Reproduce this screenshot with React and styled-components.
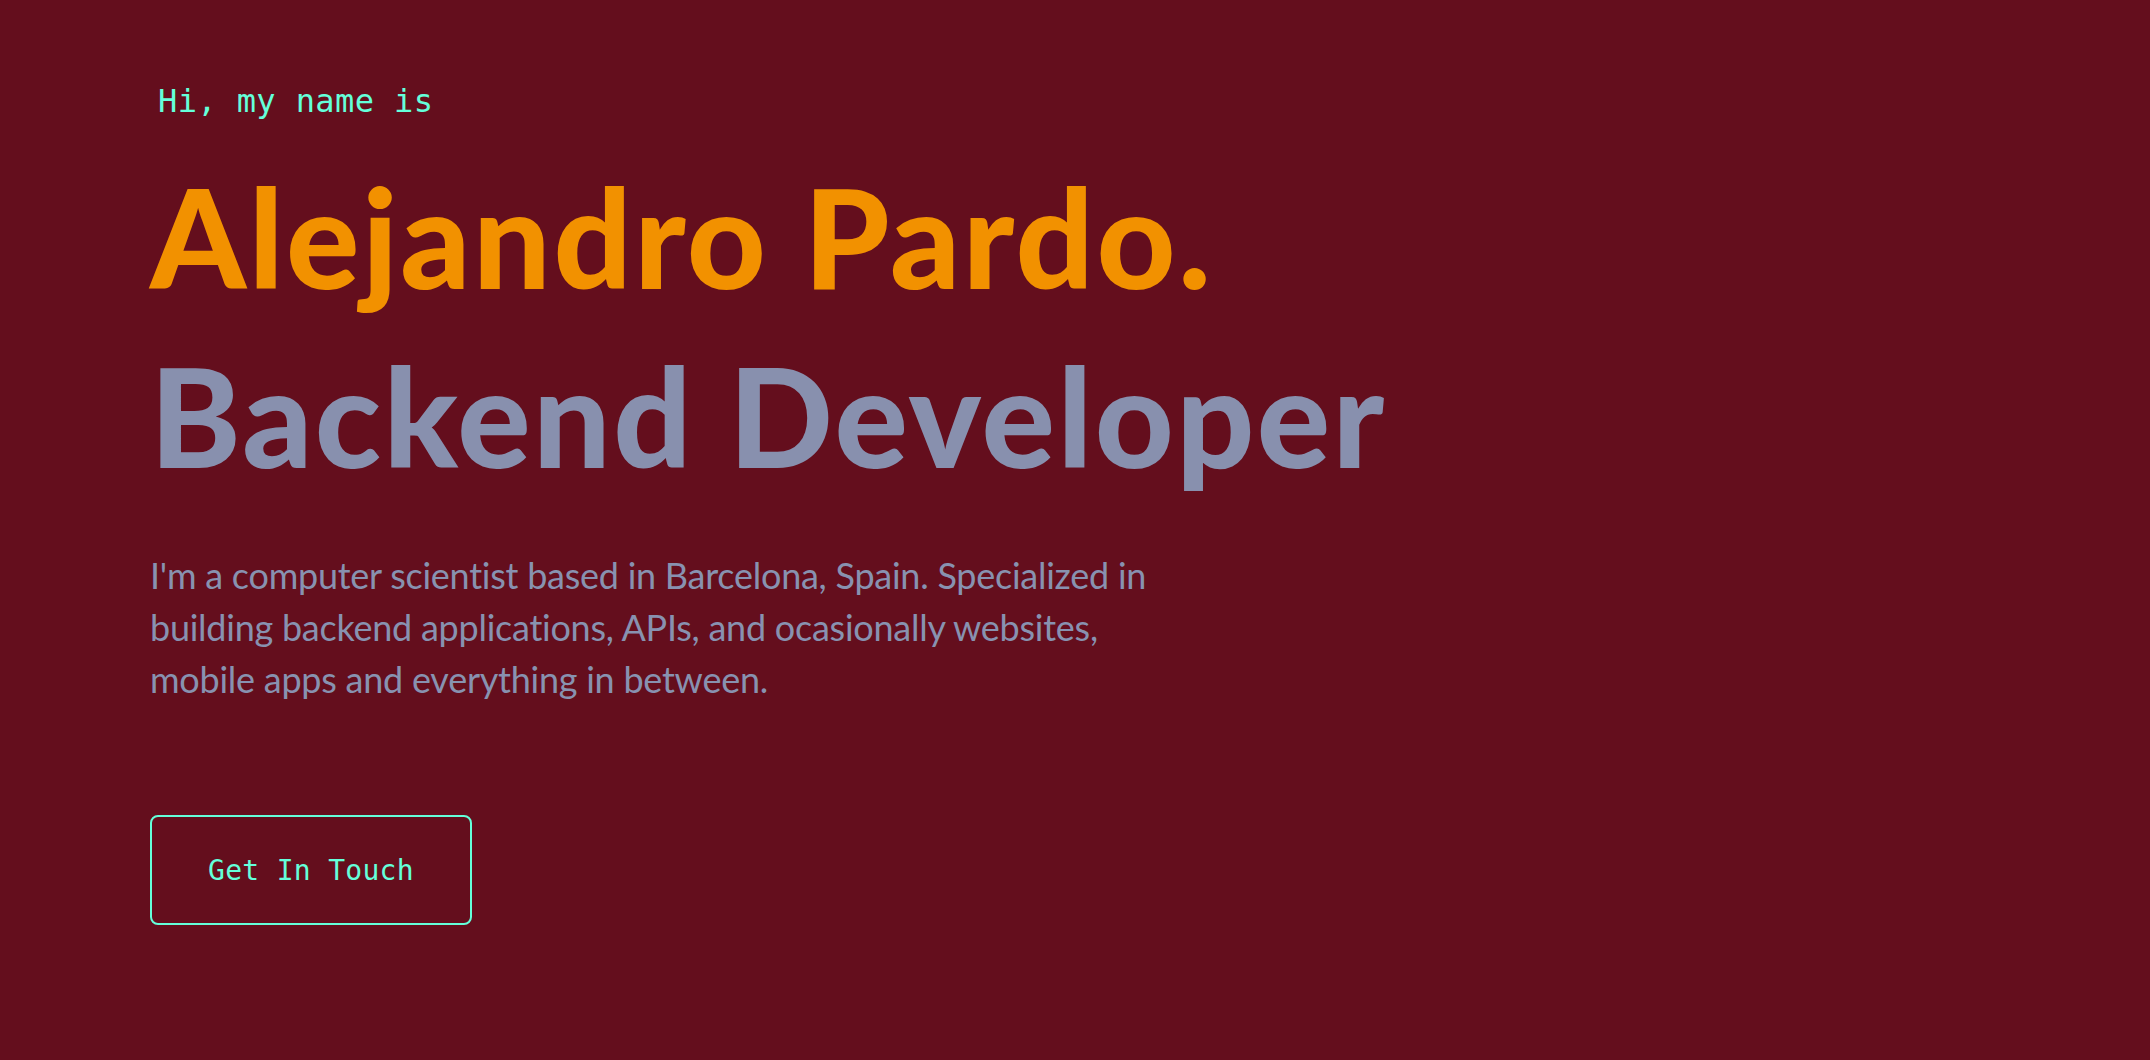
import React from "react";
import styled, { createGlobalStyle } from "styled-components";

const Global = createGlobalStyle`
  html, body { margin: 0; padding: 0; background: #640e1d; }
  body { min-height: 1060px; }
`;

const Hero = styled.section`
  box-sizing: border-box;
  min-height: 1060px;
  padding: 85px 150px 0;
  display: flex;
  flex-direction: column;
  align-items: flex-start;
  background: #640e1d;
`;

const Greeting = styled.h1`
  margin: 0 0 30px 8px;
  font-family: "DejaVu Sans Mono", "Liberation Mono", monospace;
  font-weight: 400;
  font-size: 32px;
  line-height: 32px;
  letter-spacing: 0.4px;
  color: #64ffda;
`;

const BigHeading = styled.h2`
  margin: 0;
  font-family: Lato, "Noto Sans", sans-serif;
  font-weight: 900;
  font-size: ${(p) => p.$size}px;
  line-height: 179px;
  color: ${(p) => p.$color};
  letter-spacing: ${(p) => p.$ls}px;
  white-space: nowrap;
`;

const Intro = styled.p`
  margin: 44px 0 0;
  max-width: 1020px;
  font-family: Lato, "Noto Sans", sans-serif;
  font-weight: 400;
  font-size: 36px;
  line-height: 52px;
  color: #8892b0;
  letter-spacing: -0.25px;
`;

const Button = styled.a`
  box-sizing: border-box;
  margin-top: 110px;
  width: 322px;
  height: 110px;
  display: flex;
  align-items: center;
  justify-content: center;
  border: 2px solid #64ffda;
  border-radius: 8px;
  font-family: "DejaVu Sans Mono", "Liberation Mono", monospace;
  font-size: 28px;
  letter-spacing: 0.3px;
  color: #64ffda;
  text-decoration: none;
`;

export default function App() {
  return (
    <>
      <Global />
      <Hero>
        <Greeting>Hi, my name is</Greeting>
        <BigHeading $size={137} $color="#f29100" $ls={2.6}>Alejandro Pardo.</BigHeading>
        <BigHeading $size={137} $color="#8890ae" $ls={2.4}>Backend Developer</BigHeading>
        <Intro>
          I'm a computer scientist based in Barcelona, Spain. Specialized in
          building backend applications, APIs, and ocasionally websites,
          mobile apps and everything in between.
        </Intro>
        <Button href="#">Get In Touch</Button>
      </Hero>
    </>
  );
}
